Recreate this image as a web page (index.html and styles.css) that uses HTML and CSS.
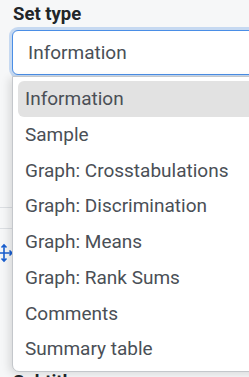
FILE: index.html
```html
<!DOCTYPE html>
<html lang="en">
<head>
    <meta charset="UTF-8">
    <meta name="viewport" content="width=device-width, initial-scale=1.0">
    <title>Set type</title>
    <link rel="stylesheet" href="styles.css">
</head>
<body>
    <div class="page">
        <label class="field-label" for="setType">Set type</label>
        <div class="select-box" id="setType">Information</div>

        <!-- content behind the open menu -->
        <div class="sets">
            <div class="set-row"></div>
            <div class="set-row">
                <svg class="move-icon" width="16" height="20" viewBox="0 0 16 20">
                    <path d="M5 2v16M1 10h12M2.5 4.5L5 2l2.5 2.5M2.5 15.5L5 18l2.5-2.5M10.5 7.5L13 10l-2.5 2.5" fill="none" stroke="#1a5fd0" stroke-width="1.6"/>
                </svg>
            </div>
        </div>
        <div class="field-label next">Subtitle</div>

        <!-- open dropdown -->
        <ul class="menu">
            <li class="menu-item active">Information</li>
            <li class="menu-item">Sample</li>
            <li class="menu-item">Graph: Crosstabulations</li>
            <li class="menu-item">Graph: Discrimination</li>
            <li class="menu-item">Graph: Means</li>
            <li class="menu-item">Graph: Rank Sums</li>
            <li class="menu-item">Comments</li>
            <li class="menu-item">Summary table</li>
        </ul>
    </div>
</body>
</html>
```

FILE: styles.css
```css
body {
    margin: 0;
    padding: 0;
    font-family: Roboto, "Liberation Sans", sans-serif;
    background-color: #f6f7f8;
    overflow: hidden;
}
.page {
    position: relative;
    padding: 2px 0 0 12px;
    height: 377px;
}
.field-label {
    display: block;
    font-size: 18.5px;
    font-weight: bold;
    color: #212529;
    margin-left: 1px;
    line-height: 24px;
}
.select-box {
    margin-top: 4px;
    width: 260px;
    height: 43px;
    box-sizing: content-box;
    border: 1px solid #4a8ee6;
    border-radius: 6px;
    background-color: #fff;
    box-shadow: 0 0 0 3px rgba(110, 160, 230, 0.35);
    font-size: 19px;
    line-height: 43px;
    color: #495057;
    padding-left: 15px;
}
.sets {
    margin: 132px 0 0 -12px;
}
.set-row {
    height: 20px;
    border-top: 1px solid #dcdfe3;
}
.set-row + .set-row {
    height: 138px;
}
.move-icon {
    display: block;
    margin: 14px 0 0 -1px;
}
.next {
    margin-top: 3px;
}
.menu {
    position: absolute;
    top: 76px;
    left: 12px;
    width: 260px;
    margin: 0;
    padding: 4px 0 4px 5px;
    list-style: none;
    background-color: #fff;
    border: 1px solid #c4c7cb;
    border-radius: 0 0 0 7px;
    box-shadow: -3px 2px 8px rgba(0, 0, 0, 0.12);
}
.menu-item {
    height: 35.75px;
    line-height: 35.75px;
    padding-left: 7px;
    font-size: 19px;
    color: #4a4f56;
    border-radius: 6px 0 0 6px;
}
.menu-item.active {
    background-color: #e2e2e2;
}
```
